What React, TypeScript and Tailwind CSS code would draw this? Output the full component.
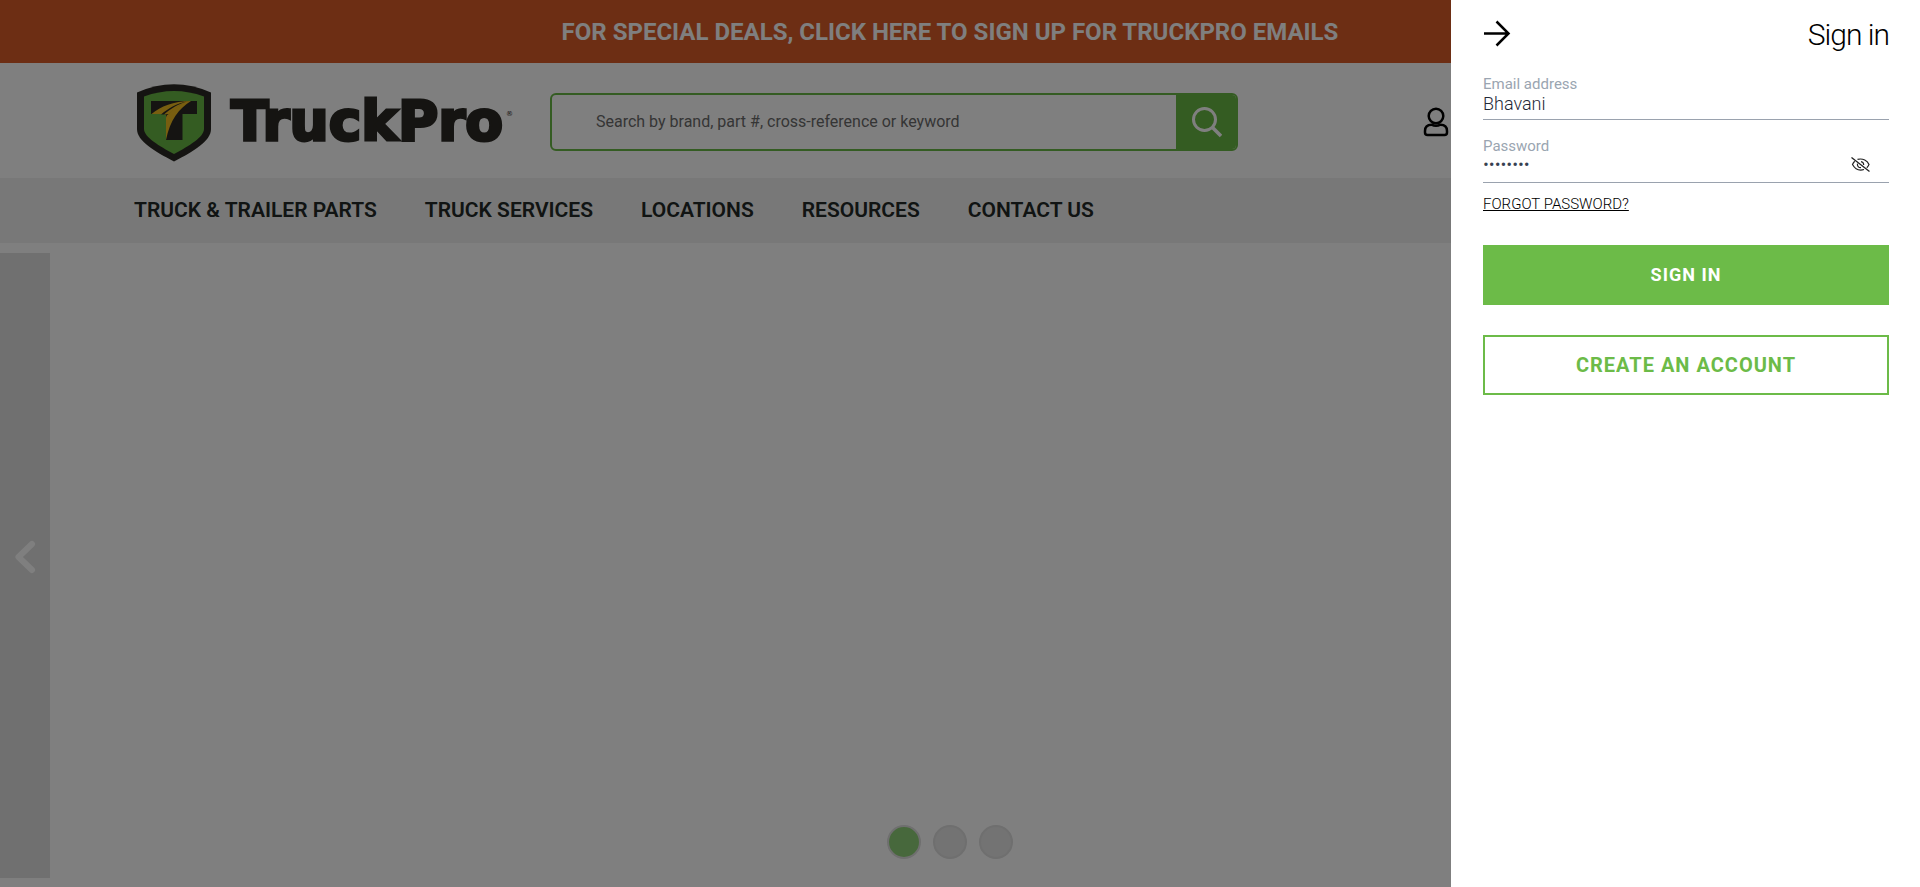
import { useState } from "react";

const navItems = ["TRUCK & TRAILER PARTS", "TRUCK SERVICES", "LOCATIONS", "RESOURCES", "CONTACT US"];

function Logo() {
  return (
    <a href="#home" aria-label="TruckPro home" className="flex shrink-0">
      <svg width="380" height="80" viewBox="0 0 380 80">
        <path d="M3 10.500 Q40 -6 77 10.500 V47 C77 59 60 69 40 79.500 C20 69 3 59 3 47 Z" fill="#2b2924" />
        <path d="M10 14.500 Q40 3.500 70 14.500 V47 C70 55 55 64 40 72 C25 64 10 55 10 47 Z" fill="#69b844" />
        <path d="M17 19 H63 V32 H48.500 V58 H32 V32 H17 Z" fill="#2b2924" />
        <path d="M17.500 32 C27 24.500 39 19 57 19 C45 26.500 36 38 32 58 V36 C32 34 33 33 35 31.500 L28 32 Z" fill="#f0bd20" />
        <path d="M27 32.500 C35 26 43 21.500 52 19.800 C45 23 39 27 34 32.500 Z" fill="#2b2924" />
        <path d="M30 32.500 C37 26.500 44 22 52 20 C45 23.500 39 28 35 32 Z" fill="#f0bd20" />
        <text x="97" y="57.500" fontFamily="DejaVu Sans, sans-serif" fontSize="55" fontWeight="700" fill="#2b2924" stroke="#2b2924" strokeWidth="3">
          TruckPro
        </text>
        <text x="372" y="34" fontFamily="DejaVu Sans, sans-serif" fontSize="7" fill="#2b2924">
          ®
        </text>
      </svg>
    </a>
  );
}

function SearchIcon() {
  return (
    <svg width="32" height="32" viewBox="0 0 32 32" fill="none" stroke="currentColor" strokeWidth="3">
      <circle cx="14.500" cy="13.500" r="11" />
      <path d="M22.500 21.500 L31 30" strokeWidth="3.500" />
    </svg>
  );
}

function UserIcon() {
  return (
    <svg width="26" height="30" viewBox="0 0 26 30" fill="none" stroke="black" strokeWidth="2.500">
      <circle cx="13" cy="9" r="7.300" />
      <path d="M8.500 17.700 C4 17.700 2 20.500 2 24 V25.500 Q2 28 4.500 28 H21.500 Q24 28 24 25.500 V24 C24 20.500 22 17.700 17.500 17.700 Q13 20 8.500 17.700 Z" strokeLinejoin="round" />
    </svg>
  );
}

function EyeOffIcon() {
  return (
    <svg width="20" height="16" viewBox="0 0 20 16" fill="none" stroke="#222" strokeWidth="1.200">
      <path d="M0.500 0.500 L18.500 14.500" strokeWidth="1.300" />
      <path d="M6.500 2.400 C12 1 16.500 3.800 18 7.500 Q17.200 9.400 15.800 10.700" />
      <path d="M3.700 4.200 Q2.200 5.600 1.500 7.500 C4 12 8 14 13 12.500" />
      <path d="M10 4.600 Q12.700 5 12.700 8 M6.500 6.700 C6 9 7.500 10.700 10 10.600" />
    </svg>
  );
}

function SignInDrawer() {
  const [email, setEmail] = useState("Bhavani");
  const [password, setPassword] = useState("password");
  const [visible, setVisible] = useState(false);
  return (
    <aside aria-label="Sign in" className="fixed inset-y-0 right-0 w-full max-w-[469px] overflow-y-auto bg-white pr-[31px] pl-8">
      <div className="flex h-[68px] items-center justify-between">
        <button type="button" aria-label="Close">
          <svg width="28" height="28" viewBox="0 0 28 28" fill="none" stroke="black" strokeWidth="2.500">
            <path d="M1 13.500 H26 M13.500 1.500 L25.500 13.500 L13.500 25.500" />
          </svg>
        </button>
        <h2 className="text-[30px] font-light tracking-[-1px] text-black">Sign in</h2>
      </div>
      <form onSubmit={(e) => e.preventDefault()} className="flex flex-col">
        <div className="flex h-[52px] flex-col border-b border-[#9aa2ae] pt-2">
          <label htmlFor="email" className="text-[15px] leading-4 text-[#9aa5b1]">Email address</label>
          <input
            id="email"
            value={email}
            onChange={(e) => setEmail(e.target.value)}
            className="h-6 text-lg leading-6 font-light text-[#1f2937] outline-none"
          />
        </div>
        <div className="mt-3 flex h-[51px] flex-col border-b border-[#9aa2ae] pt-[6px]">
          <label htmlFor="password" className="text-[15px] leading-4 text-[#9aa5b1]">Password</label>
          <div className="flex h-[22px] items-center pr-[18px]">
            <input
              id="password"
              type={visible ? "text" : "password"}
              value={password}
              onChange={(e) => setPassword(e.target.value)}
              className="h-[22px] min-w-0 flex-1 text-lg leading-[22px] font-light text-[#374151] outline-none"
            />
            <button type="button" aria-label="Show password" onClick={() => setVisible(!visible)}>
              <EyeOffIcon />
            </button>
          </div>
        </div>
        <a href="#forgot" className="mt-[9px] self-start text-[15px] leading-6 font-light text-black underline">FORGOT PASSWORD?</a>
        <button type="submit" className="mt-[29px] h-[60px] bg-[#6cbb48] text-lg font-bold tracking-[1px] text-white">SIGN IN</button>
        <button type="button" className="mt-[30px] h-[60px] border-2 border-[#6cbb48] text-xl font-bold tracking-[1px] text-[#6cbb48]">CREATE AN ACCOUNT</button>
      </form>
    </aside>
  );
}

export default function App() {
  return (
    <div className="flex min-h-screen flex-col bg-white font-['Roboto',sans-serif]">
      <a href="#deals" className="flex h-[63px] items-center justify-center bg-[#da5c28] pr-5 text-2xl font-bold text-white">
        FOR SPECIAL DEALS, CLICK HERE TO SIGN UP FOR TRUCKPRO EMAILS
      </a>
      <header className="flex h-[115px] items-center pt-[3px] pl-[134px]">
        <Logo />
        <form role="search" onSubmit={(e) => e.preventDefault()} className="ml-9 flex h-[58px] w-[688px] overflow-hidden rounded-md border-2 border-[#69b844]">
          <input
            aria-label="Search"
            placeholder="Search by brand, part #, cross-reference or keyword"
            className="min-w-0 flex-1 pl-11 text-base text-black outline-none placeholder:text-[#6b6b6b]"
          />
          <button type="submit" aria-label="Search" className="flex w-[60px] items-center justify-center bg-[#69b844] text-white">
            <SearchIcon />
          </button>
        </form>
        <button type="button" aria-label="Account" className="ml-[185px]">
          <UserIcon />
        </button>
      </header>
      <nav className="flex h-[65px] items-center gap-12 bg-[#f1f1f1] pb-px pl-[134px]">
        {navItems.map((item) => (
          <a key={item} href="#nav" className="text-[21px] leading-8 font-semibold text-[#222926]">{item}</a>
        ))}
      </nav>
      <main className="relative mt-[10px] mb-[9px] flex flex-1">
        <button type="button" aria-label="Previous slide" className="flex w-[50px] items-center justify-center bg-[#e1e1e1]">
          <svg width="22" height="34" viewBox="0 0 22 34" fill="none" stroke="white" strokeWidth="6" strokeLinejoin="round" strokeLinecap="round" className="mb-[18px]">
            <path d="M18 4 L4.500 17 L18 30" />
          </svg>
        </button>
        <div className="absolute inset-x-0 bottom-[19px] flex justify-center gap-3 pr-5">
          <button type="button" aria-label="Slide 1" className="size-[34px] rounded-full border-2 border-[#dedede] bg-[#8fd178]" />
          <button type="button" aria-label="Slide 2" className="size-[34px] rounded-full border-2 border-[#dedede] bg-[#e6e6e6]" />
          <button type="button" aria-label="Slide 3" className="size-[34px] rounded-full border-2 border-[#dedede] bg-[#e6e6e6]" />
        </div>
      </main>
      <div className="fixed inset-0 bg-black/50" />
      <SignInDrawer />
    </div>
  );
}
